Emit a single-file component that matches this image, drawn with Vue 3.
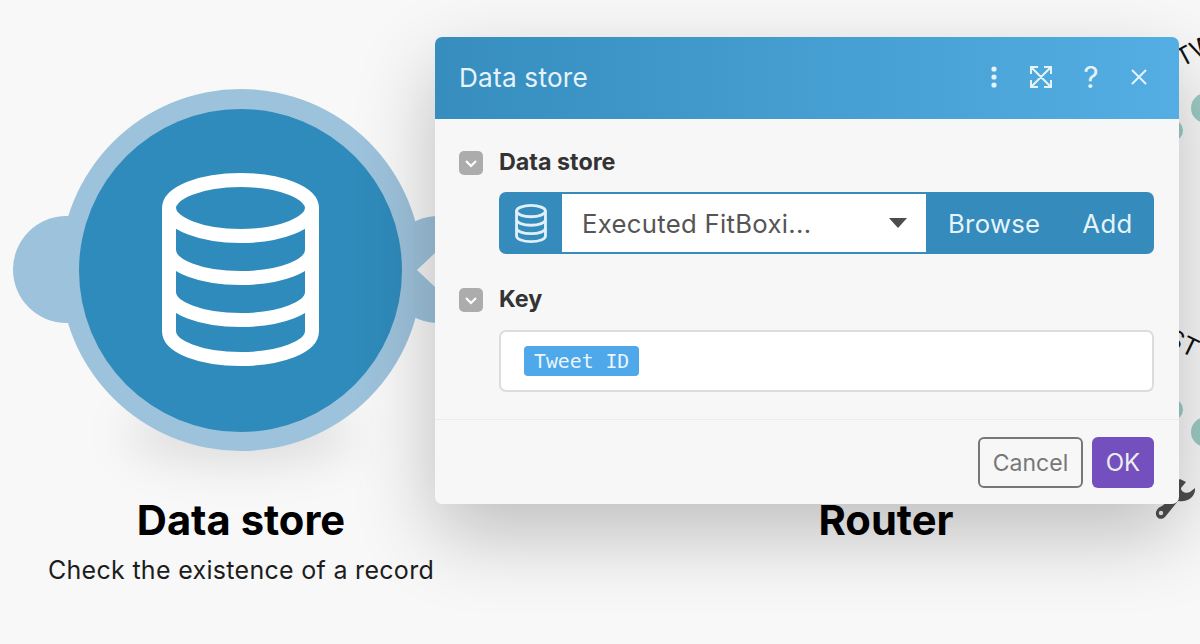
<script setup>
const nodes = [
  { name: "Data store", sub: "Check the existence of a record", cx: 241 },
  { name: "Router", sub: "", cx: 886 },
];
</script>

<template>
  <main class="canvas">
    <!-- scenario behind the dialog -->
    <div class="shade"></div>
    <div class="bump left"></div>
    <div class="bump right"></div>
    <div class="node-ring">
      <div class="node">
        <svg class="db-big" viewBox="0 0 157 193" fill="none" stroke="#fff" stroke-width="14">
          <ellipse cx="78.500" cy="35" rx="71.500" ry="28" />
          <path d="M7 35V158C7 174 39 186 78.500 186S150 174 150 158V35" />
          <path d="M7 77C7 93 39 105 78.500 105S150 93 150 77" />
          <path d="M7 119C7 135 39 147 78.500 147S150 135 150 119" />
        </svg>
      </div>
    </div>
    <div class="notch"></div>
    <div v-for="n in nodes" :key="n.name" class="node-label" :style="{ left: n.cx - 220 + 'px' }">
      <h2>{{ n.name }}</h2>
      <p>{{ n.sub }}</p>
    </div>

    <div class="dot d1"></div>
    <div class="dot d2"></div>
    <div class="dot d3"></div>
    <div class="dot d4"></div>
    <span class="curve-text t1">TW</span>
    <span class="curve-text t2">ST</span>
    <svg class="wrench" viewBox="0 0 50 55" fill="#4f4f4f">
      <path d="M30 9L36 12L31 18C31 22 36 24 40 22L45 18C46 26 38 33 28 31L15 47C11 51 5 48 6 42C7 39 9 37 12 36L26 25C24 18 25 12 30 9Z" />
      <circle cx="11" cy="43" r="2.200" fill="#eee" />
    </svg>

    <section class="dialog">
      <header class="head">
        <span class="title">Data store</span>
        <div class="head-icons">
          <svg class="ic" viewBox="0 0 24 24" fill="#e6f3fb">
            <circle cx="12" cy="4" r="2.600" />
            <circle cx="12" cy="12" r="2.600" />
            <circle cx="12" cy="20" r="2.600" />
          </svg>
          <svg class="ic expand" viewBox="0 0 24 24" fill="none" stroke="#e6f3fb" stroke-width="2">
            <path d="M2 9V2H9M15 2H22V9M22 15V22H15M9 22H2V15M3 3L21 21M21 3L3 21" />
          </svg>
          <span class="ic help">?</span>
          <svg class="ic" viewBox="0 0 24 24" fill="none" stroke="#e6f3fb" stroke-width="2">
            <path d="M5 5L19 19M19 5L5 19" />
          </svg>
        </div>
      </header>

      <div class="body">
        <div class="field-head">
          <span class="toggle">
            <svg viewBox="0 0 24 24" fill="none" stroke="#fff" stroke-width="2.200"><path d="M7 10L12 15L17 10" /></svg>
          </span>
          <label>Data store</label>
        </div>
        <div class="picker">
          <span class="picker-icon">
            <svg class="db-small" viewBox="0 0 157 193" fill="none" stroke="#dff0fa" stroke-width="14">
              <ellipse cx="78.500" cy="35" rx="71.500" ry="28" />
              <path d="M7 35V158C7 174 39 186 78.500 186S150 174 150 158V35" />
              <path d="M7 77C7 93 39 105 78.500 105S150 93 150 77" />
              <path d="M7 119C7 135 39 147 78.500 147S150 135 150 119" />
            </svg>
          </span>
          <div class="select">
            <span>Executed FitBoxi...</span>
            <i class="caret"></i>
          </div>
          <button class="link browse">Browse</button>
          <button class="link add">Add</button>
        </div>

        <div class="field-head second">
          <span class="toggle">
            <svg viewBox="0 0 24 24" fill="none" stroke="#fff" stroke-width="2.200"><path d="M7 10L12 15L17 10" /></svg>
          </span>
          <label>Key</label>
        </div>
        <div class="input">
          <span class="tag">Tweet ID</span>
        </div>
      </div>

      <footer class="foot">
        <button class="cancel">Cancel</button>
        <button class="ok">OK</button>
      </footer>
    </section>
  </main>
</template>

<style>
html,
body {
  margin: 0;
  background: #f7f7f7;
  overflow: hidden;
}
</style>

<style scoped>
.canvas {
  position: relative;
  width: 1200px;
  height: 644px;
  overflow: hidden;
  background: #f8f8f8;
  font-family: Inter, "Liberation Sans", sans-serif;
}

.shade {
  position: absolute;
  left: 125px;
  top: 405px;
  width: 230px;
  height: 60px;
  border-radius: 50%;
  background: rgba(0, 0, 0, 0.1);
  filter: blur(22px);
}

.node-ring {
  position: absolute;
  left: 59.500px;
  top: 89px;
  width: 362px;
  height: 362px;
  border-radius: 50%;
  background: #9dc2db;
  display: flex;
  align-items: center;
  justify-content: center;
}

.node {
  width: 323px;
  height: 323px;
  border-radius: 50%;
  background: #2f8bbb;
  display: flex;
  align-items: center;
  justify-content: center;
}

.db-big {
  width: 157px;
  height: 193px;
  margin-top: -1px;
}

.bump {
  position: absolute;
  top: 216px;
  width: 107px;
  height: 107px;
  border-radius: 50%;
  background: #9dc2db;
}

.bump.left {
  left: 13px;
}

.bump.right {
  left: 385px;
}

.notch {
  position: absolute;
  left: 417px;
  top: 253px;
  width: 18px;
  height: 34px;
  background: #f4f4f4;
  clip-path: polygon(100% 0, 0 50%, 100% 100%);
}

.node-label {
  position: absolute;
  top: 494px;
  width: 440px;
  text-align: center;
  color: #000;
}

.node-label h2 {
  margin: 0;
  font-size: 41.700px;
  line-height: 52px;
  font-weight: 700;
}

.node-label p {
  margin: 8px 0 0;
  font-size: 25px;
  line-height: 32px;
  letter-spacing: 0.3px;
  color: #1d1d1d;
}

.dot {
  position: absolute;
  border-radius: 50%;
  background: #9ccbc4;
}

.d1 {
  left: 1191px;
  top: 93px;
  width: 30px;
  height: 30px;
}

.d2 {
  left: 1191px;
  top: 417px;
  width: 30px;
  height: 30px;
}

.d3 {
  left: 1162px;
  top: 120px;
  width: 21px;
  height: 21px;
}

.d4 {
  left: 1162px;
  top: 399px;
  width: 21px;
  height: 21px;
}

.curve-text {
  position: absolute;
  font-size: 25px;
  line-height: 28px;
  color: #111;
  transform: rotate(-28deg);
}

.t1 {
  left: 1175px;
  top: 36px;
}

.t2 {
  left: 1167px;
  top: 329px;
  transform: rotate(26deg);
}

.wrench {
  position: absolute;
  left: 1150px;
  top: 470px;
  width: 50px;
  height: 55px;
}

.dialog {
  position: absolute;
  left: 435px;
  top: 37px;
  width: 744px;
  height: 467px;
  display: flex;
  flex-direction: column;
  background: #f7f7f7;
  border-radius: 7px;
  box-shadow: 0 30px 80px rgba(0, 0, 0, 0.24);
  overflow: hidden;
}

.head {
  flex: none;
  height: 82px;
  display: flex;
  align-items: center;
  justify-content: space-between;
  padding: 0 28px 0 24px;
  background: linear-gradient(90deg, #368dbe, #54aee3);
  color: #e6f3fb;
}

.title {
  margin-bottom: 2px;
  font-size: 26.200px;
  font-weight: 400;
  letter-spacing: 0.2px;
}

.head-icons {
  display: flex;
  align-items: center;
  gap: 24px;
  margin-bottom: 2px;
}

.ic {
  display: block;
  width: 24px;
  height: 24px;
}

.expand {
  margin-left: -1px;
}

.help {
  margin-left: 2px;
  font-size: 30px;
  line-height: 24px;
  text-align: center;
}

.body {
  flex: 1;
  padding: 32px 25px 0 24px;
}

.field-head {
  display: flex;
  align-items: center;
  gap: 16px;
  height: 24px;
  color: #333;
  font-size: 23.300px;
  font-weight: 700;
}

.field-head label {
  margin-bottom: 4px;
}

.field-head.second {
  margin-top: 34px;
}

.toggle {
  width: 24px;
  height: 24px;
  border-radius: 5px;
  background: #acacac;
}

.toggle svg {
  display: block;
  width: 24px;
  height: 24px;
}

.picker {
  margin: 17px 0 0 40px;
  height: 62px;
  display: flex;
  align-items: stretch;
  background: #348bbc;
  border-radius: 7px;
  overflow: hidden;
}

.picker-icon {
  flex: none;
  width: 63px;
  display: flex;
  align-items: center;
  justify-content: center;
}

.db-small {
  width: 32px;
  height: 39px;
}

.select {
  flex: none;
  width: 364px;
  margin: 2px 0;
  display: flex;
  align-items: center;
  justify-content: space-between;
  box-sizing: border-box;
  padding: 0 19px 0 20px;
  background: #fff;
  color: #555;
  font-size: 25.700px;
  letter-spacing: 0.3px;
}

.caret {
  width: 0;
  height: 0;
  border-left: 9px solid transparent;
  border-right: 9px solid transparent;
  border-top: 10px solid #4c4c4c;
}

.link {
  border: none;
  background: none;
  padding: 0;
  color: #e6f3fb;
  font: inherit;
  font-size: 25.700px;
  letter-spacing: 0.3px;
}

.browse {
  margin-left: 22px;
}

.add {
  margin-left: 42px;
}

.input {
  margin: 18px 0 0 40px;
  height: 62px;
  box-sizing: border-box;
  display: flex;
  align-items: center;
  padding-left: 23px;
  background: #fff;
  border: 2px solid #dcdcdc;
  border-radius: 7px;
}

.tag {
  height: 30px;
  padding: 0 10px;
  display: flex;
  align-items: center;
  background: #4fa8ea;
  border-radius: 4px;
  color: #eaf5fd;
  font-family: "DejaVu Sans Mono", "Liberation Mono", monospace;
  font-size: 19.800px;
}

.foot {
  flex: none;
  height: 85px;
  box-sizing: border-box;
  display: flex;
  justify-content: flex-end;
  gap: 9px;
  padding: 17px 25px 16px 0;
  border-top: 1px solid #ececec;
}

.foot button {
  font-family: inherit;
  font-size: 24px;
  border-radius: 6px;
}

.foot .cancel {
  width: 105px;
  background: none;
  border: 2px solid #777;
  color: #777;
  font-size: 23px;
}

.foot .ok {
  width: 62px;
  border: none;
  background: #7350bd;
  color: #eee;
}
</style>
